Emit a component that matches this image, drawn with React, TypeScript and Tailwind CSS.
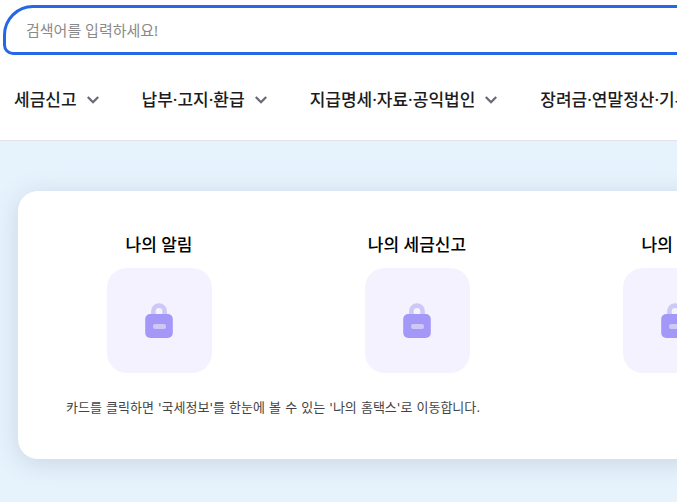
interface Menu {
  label: string;
  href: string;
}

const menus: Menu[] = [
  { label: "세금신고", href: "#report" },
  { label: "납부·고지·환급", href: "#payment" },
  { label: "지급명세·자료·공익법인", href: "#statements" },
  { label: "장려금·연말정산·기부금", href: "#incentives" },
];

const cards: Menu[] = [
  { label: "나의 알림", href: "#my-alerts" },
  { label: "나의 세금신고", href: "#my-report" },
  { label: "나의 환급", href: "#my-refund" },
];

const ChevronIcon = () => (
  <svg width="12" height="8" viewBox="0 0 12 8" fill="none" aria-hidden="true" className="shrink-0">
    <path d="M.8 1 6 6.2 11.2 1" stroke="#6b6878" strokeWidth="2.3" />
  </svg>
);

const LockIcon = () => (
  <svg width="28" height="36" viewBox="0 0 28 36" fill="none" aria-hidden="true">
    <path d="M8.4 14V8.2a5.6 5.6 0 0 1 11.2 0V14" stroke="#cdc8f5" strokeWidth="4.6" />
    <rect x="0.2" y="11" width="27.6" height="24" rx="5" fill="#a398f7" />
    <rect x="8" y="21" width="13" height="5" rx="2" fill="#cdc8f5" />
  </svg>
);

const Header = () => (
  <header className="border-b border-[#e2e2e8] bg-white pt-[5px]">
    <form role="search" className="-mr-8 ml-[3px]">
      <input
        type="search"
        aria-label="검색어"
        placeholder="검색어를 입력하세요!"
        className="block h-[50px] w-full rounded-tl-[30px] rounded-bl-[10px] border-[3px] border-[#2567e8] bg-white px-5 text-[15px] text-[#222] outline-none placeholder:text-[#8a8a8a]"
      />
    </form>
    <nav className="flex h-[85px] items-center gap-[43px] pl-[14px] pt-1">
      {menus.map((menu) => (
        <a
          key={menu.href}
          href={menu.href}
          className="flex shrink-0 items-center gap-[10px] whitespace-nowrap text-[17px] font-medium leading-6 text-[#1c1c1c]"
        >
          {menu.label}
          <ChevronIcon />
        </a>
      ))}
    </nav>
  </header>
);

const MyTax = () => (
  <section className="flex-1 bg-[#e6f3fd] pb-[43px] pt-[50px]">
    <div className="-mr-8 ml-[18px] rounded-[20px] bg-white px-3 pb-[41px] pt-[42px] shadow-[0_4px_24px_rgba(90,100,120,0.2)]">
      <ul className="flex">
        {cards.map((card) => (
          <li key={card.href} className="w-[258px] shrink-0">
            <a href={card.href} className="flex flex-col items-center gap-[11px]">
              <strong className="text-[17px] font-medium leading-6 text-black">{card.label}</strong>
              <span className="flex size-[105px] items-center justify-center rounded-[20px] bg-[#f4f2ff]">
                <LockIcon />
              </span>
            </a>
          </li>
        ))}
      </ul>
      <p className="mt-[25px] pl-9 font-['DejaVu_Sans','Noto_Sans_CJK_KR',sans-serif] text-[13px] leading-5 text-[#444]">
        카드를 클릭하면 '국세정보'를 한눈에 볼 수 있는 '나의 홈택스'로 이동합니다.
      </p>
    </div>
  </section>
);

const App = () => (
  <div className="flex min-h-screen flex-col overflow-hidden bg-white font-['Noto_Sans','Noto_Sans_CJK_KR',sans-serif]">
    <Header />
    <MyTax />
  </div>
);

export default App;
